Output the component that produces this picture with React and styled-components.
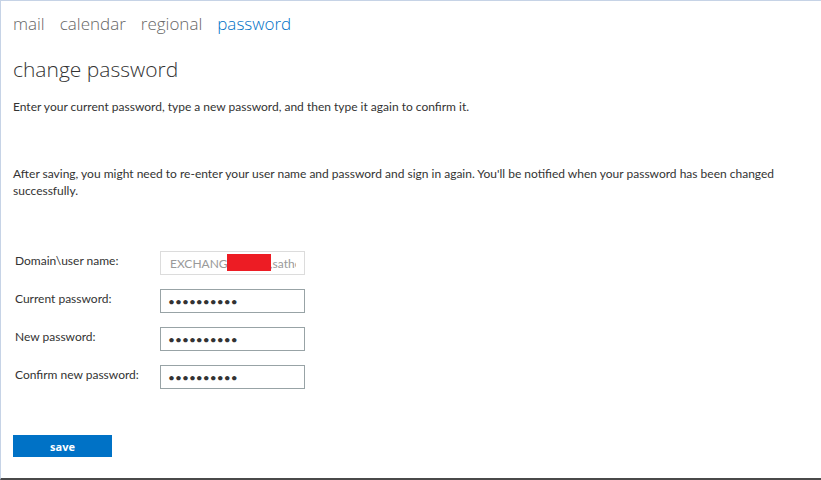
import React from "react";
import styled, { createGlobalStyle } from "styled-components";

const Global = createGlobalStyle`
  html, body { margin: 0; padding: 0; background: #fff; }
  body { width: 821px; height: 480px; overflow: hidden; }
  #root { height: 480px; }
`;

const Frame = styled.div`
  box-sizing: border-box;
  width: 821px;
  height: 480px;
  border-top: 1px solid #c6d3e6;
  border-left: 1px solid #c6d3e6;
  border-bottom: 2px solid #4a4a4a;
  padding: 8px 20px 0 12px;
  display: flex;
  flex-direction: column;
  font-family: "Lato", "Open Sans", sans-serif;
  color: #333;
`;

const Nav = styled.nav`
  display: flex;
  gap: 15px;
  height: 28px;
  align-items: center;
`;

const NavItem = styled.span`
  font-family: "Open Sans", sans-serif;
  font-weight: 300;
  font-size: 17px;
  color: ${(p) => (p.$active ? "#0072c6" : "#666")};
`;

const Title = styled.h1`
  margin: 18px 0 0;
  font-family: "Open Sans", sans-serif;
  font-weight: 300;
  font-size: 21px;
  line-height: 28px;
  color: #333;
`;

const Para = styled.p`
  margin: ${(p) => p.$mt}px 0 0;
  font-size: 12px;
  line-height: 17px;
  color: #333;
`;

const Form = styled.div`
  margin-top: 52px;
  display: flex;
  flex-direction: column;
  gap: 14px;
`;

const Row = styled.div`
  display: flex;
  align-items: center;
  height: 24px;
`;

const Label = styled.label`
  width: 145px;
  padding-left: 2px;
  font-size: 12px;
  color: #333;
  margin-top: -6px;
`;

const Field = styled.div`
  position: relative;
  width: 145px;
  height: 24px;
`;

const Input = styled.input`
  box-sizing: border-box;
  width: 145px;
  height: 24px;
  margin: 0;
  padding: 0 8px 0 ${(p) => (p.disabled ? "9px" : "7px")};
  border: 1px solid ${(p) => (p.disabled ? "#dcdcdc" : "#98a3a6")};
  background: #fff;
  color: ${(p) => (p.disabled ? "#9a9a9a" : "#333")};
  font-family: "Lato", "Open Sans", sans-serif;
  font-size: 12px;
  letter-spacing: 0;
  outline: none;
`;

const Redact = styled.div`
  position: absolute;
  left: 67px;
  top: 3px;
  width: 44px;
  height: 17px;
  background: #ed1c24;
`;

const SaveButton = styled.button`
  margin-top: 46px;
  width: 99px;
  height: 22px;
  border: none;
  background: #0072c6;
  color: #fff;
  font-family: "Open Sans", sans-serif;
  font-weight: 700;
  font-size: 11px;
  padding: 0;
  cursor: pointer;
`;

const fields = [
  { label: "Current password:" },
  { label: "New password:" },
  { label: "Confirm new password:" },
];

export default function App() {
  return (
    <>
      <Global />
      <Frame>
        <Nav>
          <NavItem>mail</NavItem>
          <NavItem>calendar</NavItem>
          <NavItem>regional</NavItem>
          <NavItem $active>password</NavItem>
        </Nav>
        <Title>change password</Title>
        <Para $mt={15}>
          Enter your current password, type a new password, and then type it again to confirm it.
        </Para>
        <Para $mt={50}>
          After saving, you might need to re-enter your user name and password and sign in again. You'll be notified when your password has been changed successfully.
        </Para>
        <Form>
          <Row>
            <Label>Domain\user name:</Label>
            <Field>
              <Input disabled value="EXCHANGE\xxxxx,sathesh" readOnly />
              <Redact />
            </Field>
          </Row>
          {fields.map((f) => (
            <Row key={f.label}>
              <Label>{f.label}</Label>
              <Field>
                <Input type="password" value="abcdefghij" readOnly />
              </Field>
            </Row>
          ))}
        </Form>
        <div>
          <SaveButton>save</SaveButton>
        </div>
      </Frame>
    </>
  );
}
